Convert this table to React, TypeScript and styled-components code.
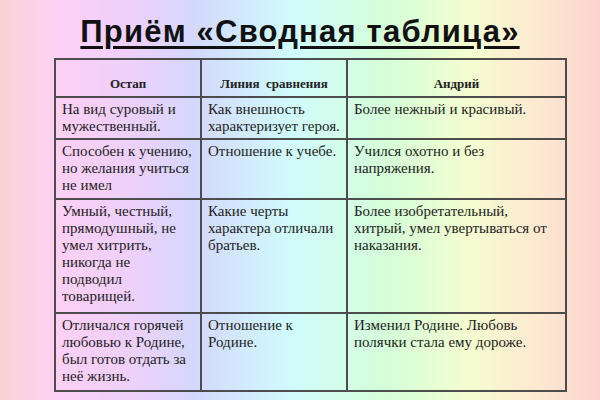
import React from "react";
import styled, {createGlobalStyle} from "styled-components";

const GlobalStyles = createGlobalStyle`
  html, body {
    margin: 0;
    padding: 0;
  }
`;

type Row = {
    height: number;
    cells: string[][];
};

const rows: Row[] = [
    {
        height: 42,
        cells: [
            ["На вид суровый и", "мужественный."],
            ["Как внешность", "характеризует героя."],
            ["Более нежный и красивый."],
        ],
    },
    {
        height: 60,
        cells: [
            ["Способен к учению,", "но желания учиться", "не имел"],
            ["Отношение к учебе."],
            ["Учился охотно и без", "напряжения."],
        ],
    },
    {
        height: 114,
        cells: [
            ["Умный, честный,", "прямодушный, не", "умел хитрить,", "никогда не", "подводил", "товарищей."],
            ["Какие черты", "характера отличали", "братьев."],
            ["Более изобретательный,", "хитрый, умел увертываться от", "наказания."],
        ],
    },
    {
        height: 78,
        cells: [
            ["Отличался горячей", "любовью к Родине,", "был готов отдать за", "неё жизнь."],
            ["Отношение к", "Родине."],
            ["Изменил Родине. Любовь", "полячки стала ему дороже."],
        ],
    },
];

function App() {
    return (
        <Page>
            <GlobalStyles/>
            <Title>Приём «Сводная таблица»</Title>
            <Table>
                <colgroup>
                    <col style={{width: 146}}/>
                    <col style={{width: 146}}/>
                    <col style={{width: 219}}/>
                </colgroup>
                <thead>
                <HeadRow>
                    <HeadCell>Остап</HeadCell>
                    <HeadCell>Линия&nbsp; сравнения</HeadCell>
                    <HeadCell>Андрий</HeadCell>
                </HeadRow>
                </thead>
                <tbody>
                {rows.map((row, i) => (
                    <BodyRow key={i} $height={row.height}>
                        {row.cells.map((lines, j) => (
                            <Cell key={j}>
                                {lines.map((line, k) => (
                                    <Line key={k}>{line}</Line>
                                ))}
                            </Cell>
                        ))}
                    </BodyRow>
                ))}
                </tbody>
            </Table>
        </Page>
    );
}

export default App;

const Page = styled.div`
  width: 600px;
  height: 400px;
  overflow: hidden;
  box-sizing: border-box;
  padding-top: 14px;
  background: linear-gradient(
    to right,
    #fbd3d6 0px,
    #fdd0f5 60px,
    #eed0fb 130px,
    #d4d8fd 195px,
    #d0fbfd 290px,
    #d5fed7 390px,
    #f5fdd0 470px,
    #fde8d0 540px,
    #fdd3d0 600px
  );
`;

const Title = styled.h1`
  margin: 0 0 8px;
  text-align: center;
  font-family: "Liberation Sans", Arial, sans-serif;
  font-weight: bold;
  font-size: 31px;
  letter-spacing: 1.2px;
  line-height: 36px;
  color: #111;
  text-decoration: underline;
  text-decoration-thickness: 3px;
  text-underline-offset: 4px;
`;

const Table = styled.table`
  margin-left: 54px;
  width: 511px;
  table-layout: fixed;
  border-collapse: collapse;
  font-family: "Liberation Serif", "Times New Roman", serif;
  color: #222;
`;

const HeadRow = styled.tr`
  height: 38px;
`;

const HeadCell = styled.th`
  border: 2px solid #4d4d4d;
  padding: 0 4px 5px;
  vertical-align: bottom;
  text-align: center;
  font-size: 13px;
  line-height: 15px;
  font-weight: bold;
`;

const BodyRow = styled.tr<{ $height: number }>`
  height: ${p => p.$height}px;
`;

const Cell = styled.td`
  border: 2px solid #4d4d4d;
  padding: 3px 6px 0;
  vertical-align: top;
  font-size: 15px;
  line-height: 17px;
`;

const Line = styled.div`
  white-space: nowrap;
`;
